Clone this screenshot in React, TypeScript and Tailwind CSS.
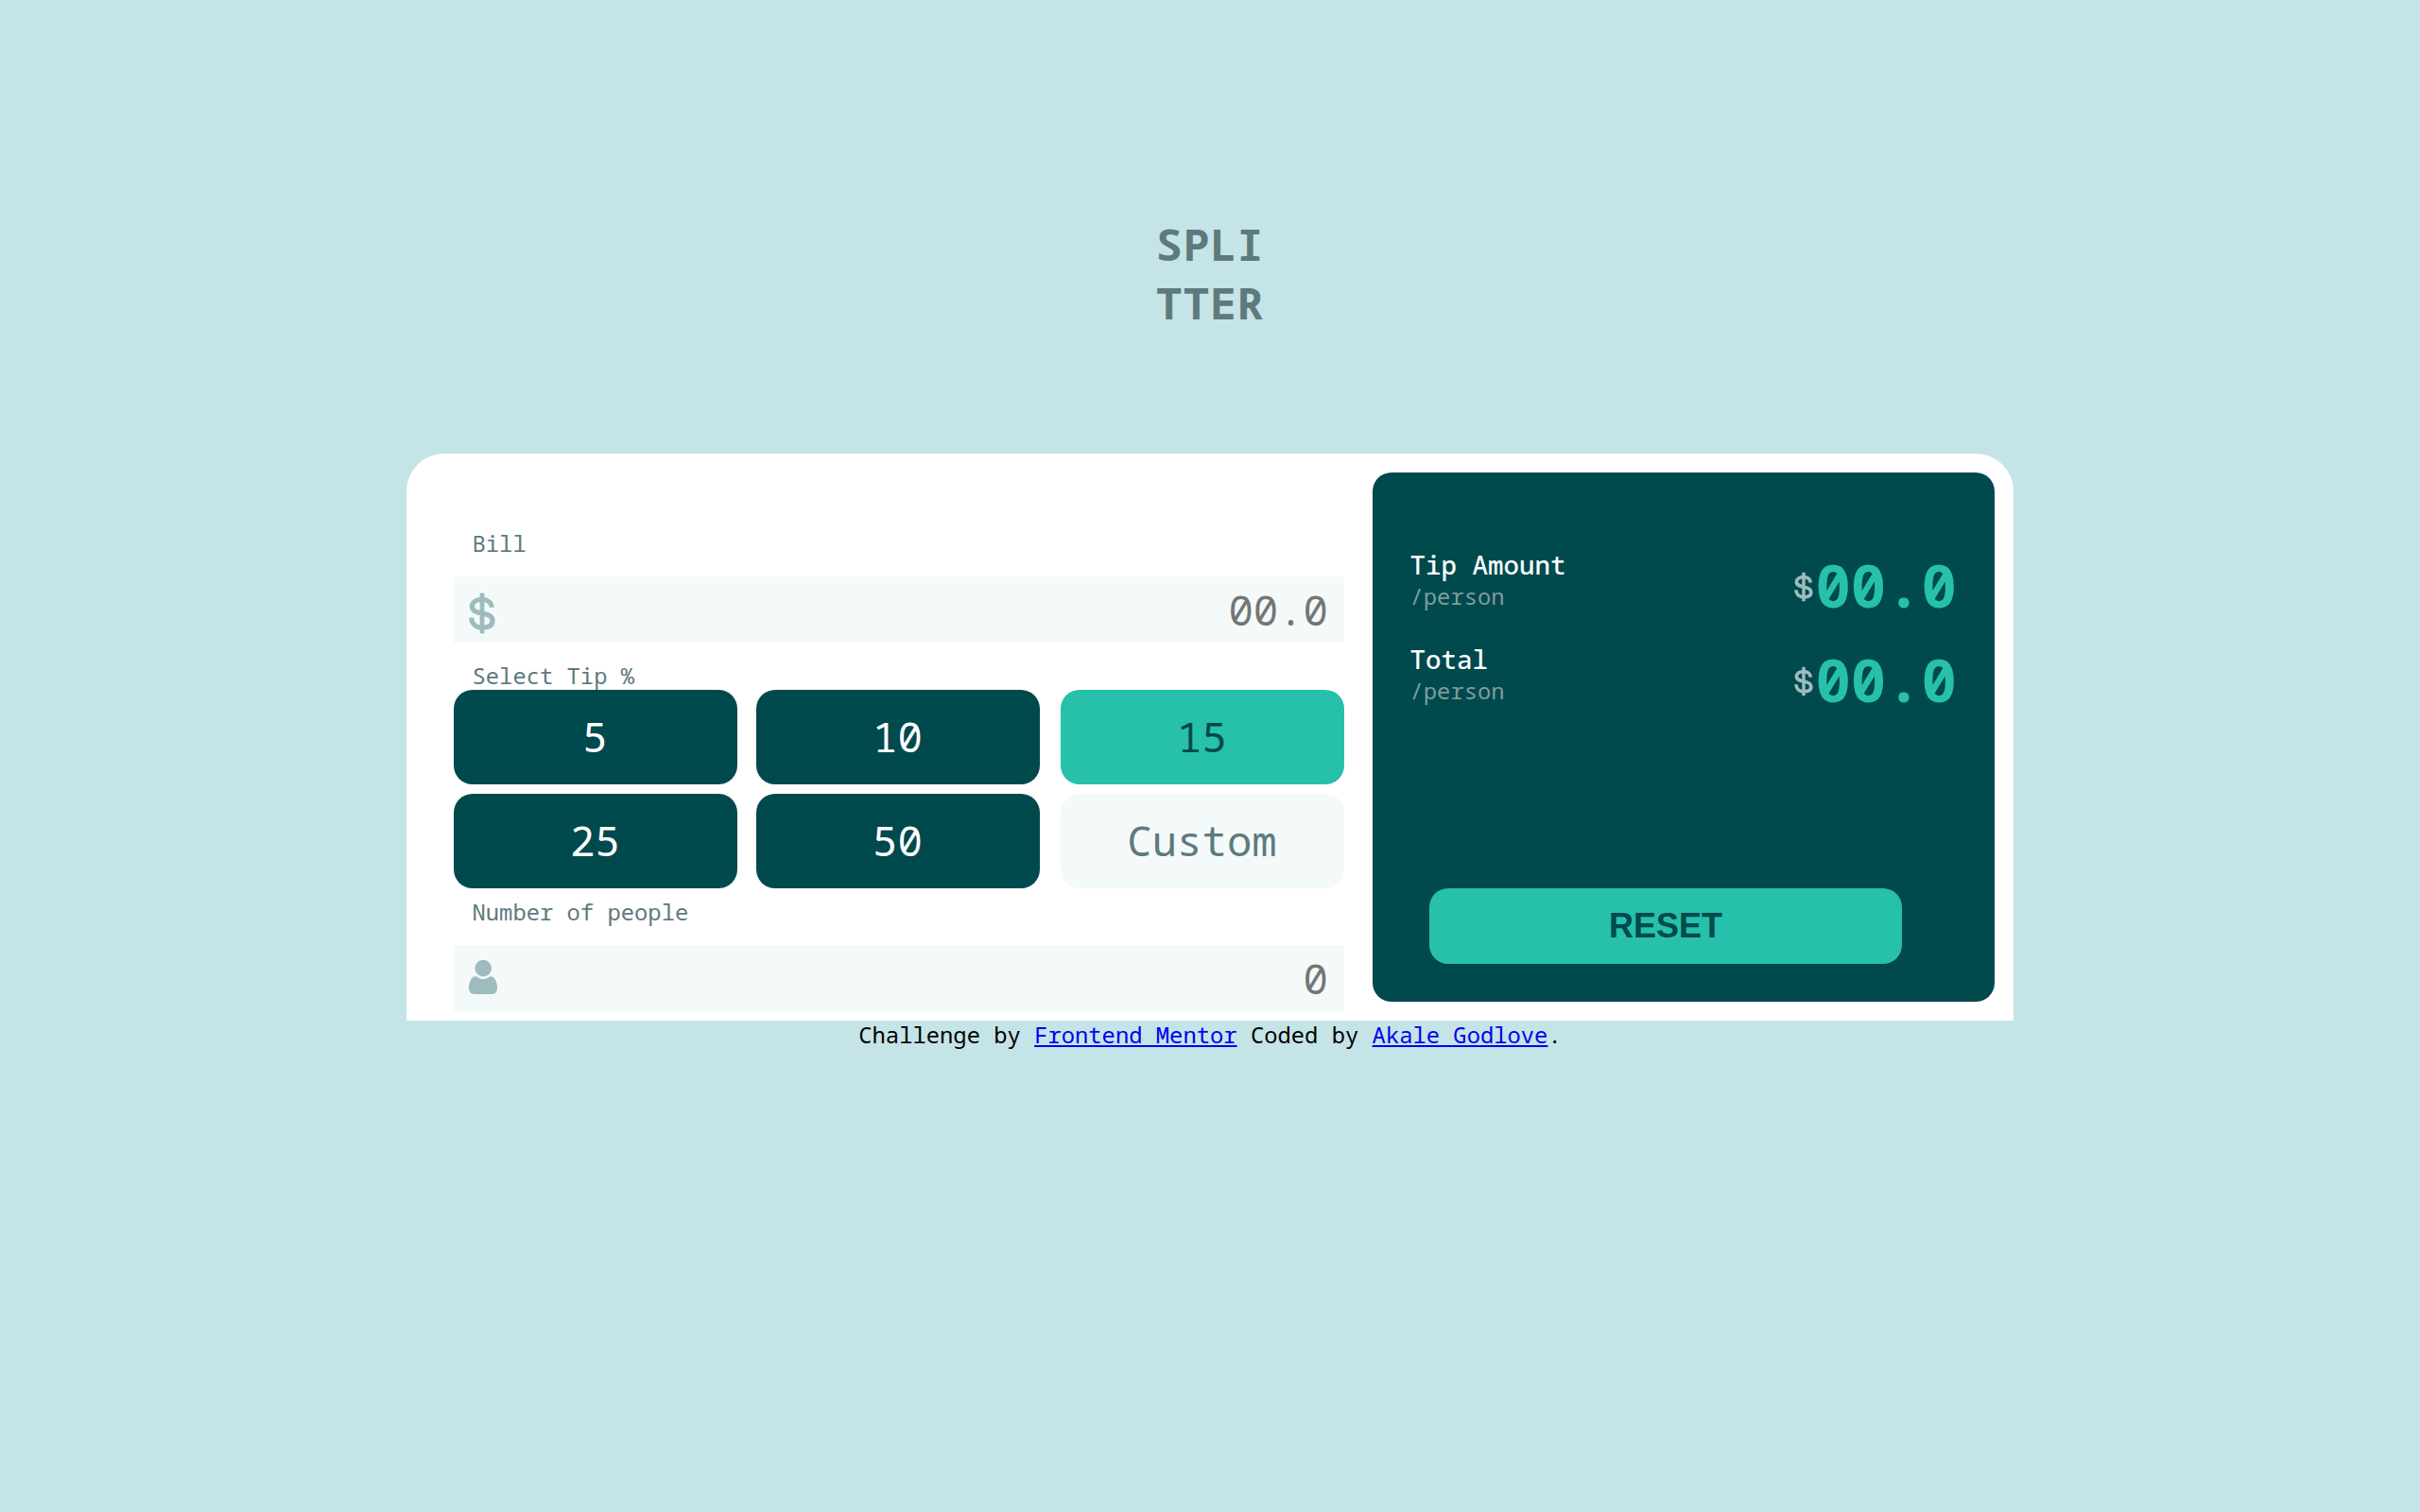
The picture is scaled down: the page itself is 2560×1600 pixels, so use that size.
import type { ReactNode } from 'react';

function DollarIcon({ className }: { className: string }) {
  return (
    <svg viewBox="0 0 28 44" fill="none" className={className} aria-hidden="true">
      <path d="M14 0.7V43.3" stroke="#9EBBBD" strokeWidth="4.8" />
      <path
        d="M24.3 15.8C23.9 10.6 19.8 7.4 14 7.4C8 7.4 3.4 10.2 3.4 14.8C3.4 19.5 7.8 20.7 14 22C20.4 23.3 25 24.8 25 30C25 35.4 20.2 37.1 14 37.1C7.6 37.1 3 33.2 2.7 26.6"
        stroke="#9EBBBD"
        strokeWidth="5.2"
      />
    </svg>
  );
}

function PersonIcon() {
  return (
    <svg viewBox="0 0 30 36" fill="#9EBBBD" className="mt-4 h-9 w-[30px]" aria-hidden="true">
      <circle cx="15.2" cy="8.6" r="8.8" />
      <path d="M6.5 17.3C7.6 17.2 8.6 17.6 9.6 18.3C13 20.7 17.4 20.7 20.8 18.3C21.8 17.6 22.8 17.2 23.9 17.4C28.3 18.4 30 24 30 29.6C30 33.6 27.9 36 24.3 36H5.8C2.2 36 0 33.6 0 29.6C0 24 2.1 18.2 6.5 17.3Z" />
    </svg>
  );
}

function Label({ children }: { children: ReactNode }) {
  return <label className="block h-[30px] pl-[19.5px] text-[23.83px] leading-[30px] text-[#5e7a7d]">{children}</label>;
}

function Field({ icon, value }: { icon: ReactNode; value: string }) {
  return (
    <div className="mt-5 flex h-[70px] items-start justify-between bg-[#f4fafa] pr-[17px] pl-4">
      {icon}
      <span className="text-[44px] leading-[70px] text-[#757575]">{value}</span>
    </div>
  );
}

const tips = [
  { text: '5', style: 'bg-[#00494d] text-white' },
  { text: '10', style: 'bg-[#00494d] text-white' },
  { text: '15', style: 'bg-[#26c0ab] text-[#00494d]' },
  { text: '25', style: 'bg-[#00494d] text-white' },
  { text: '50', style: 'bg-[#00494d] text-white' },
  { text: 'Custom', style: 'bg-[#f4fafa] text-[#5e7a7d]' },
];

function Amount({ title }: { title: string }) {
  return (
    <div className="flex h-[100px] items-start justify-between">
      <div>
        <p className="text-[27.5px] leading-9 font-medium text-white">{title}</p>
        <p className="text-[23.83px] leading-[30px] text-[#7f9c9f]">/person</p>
      </div>
      <div className="flex items-start">
        <DollarIcon className="mt-[25px] mr-[2px] h-8 w-5" />
        <span className="text-[62.33px] leading-[78px] font-bold text-[#26c0ab]">00.0</span>
      </div>
    </div>
  );
}

export default function App() {
  return (
    <div className="flex min-h-screen flex-col items-center bg-[#c5e4e7] font-['Noto_Sans_Mono','DejaVu_Sans_Mono',monospace] [font-feature-settings:'zero'_1]">
      <h1 className="mt-[227px] h-[253px] text-[46.5px] leading-[62px] font-bold tracking-[0.7px] text-[#5e7a7d]">
        SPLI
        <br />
        TTER
      </h1>

      <main className="flex h-[600px] w-[1700px] justify-between rounded-t-[40px] bg-white pr-5 pl-[50px]">
        <section className="w-[942px] pt-20">
          <Label>Bill</Label>
          <Field icon={<DollarIcon className="mt-[17px] h-11 w-7" />} value="00.0" />
          <div className="mt-5">
            <Label>Select Tip %</Label>
          </div>
          <div className="grid grid-cols-[320px_322px_300px] gap-y-[10px]">
            {tips.map((tip) => (
              <button key={tip.text} className={`h-[100px] w-[300px] rounded-[20px] pr-px text-[44px] leading-[98px] pb-[2px] ${tip.style}`}>
                {tip.text}
              </button>
            ))}
          </div>
          <div className="mt-[10px]">
            <Label>Number of people</Label>
          </div>
          <Field icon={<PersonIcon />} value="0" />
        </section>

        <section className="mt-5 flex h-[560px] w-[658px] flex-col rounded-[20px] bg-[#00494d] pt-20 pr-10 pb-10 pl-[39.5px]">
          <Amount title="Tip Amount" />
          <Amount title="Total" />
          <button className="mt-auto ml-[20.5px] h-20 w-[500px] rounded-[20px] bg-[#26c0ab] font-['Liberation_Sans',Arial,sans-serif] text-[36px] leading-[80px] font-bold text-[#00494d]">
            RESET
          </button>
        </section>
      </main>

      <footer className="text-[23.83px] leading-[30px] text-black">
        Challenge by{' '}
        <a href="#" className="text-[#0000ee] underline decoration-2 underline-offset-[2px]">Frontend Mentor</a> Coded by{' '}
        <a href="#" className="text-[#0000ee] underline decoration-2 underline-offset-[2px]">Akale Godlove</a>.
      </footer>
    </div>
  );
}
